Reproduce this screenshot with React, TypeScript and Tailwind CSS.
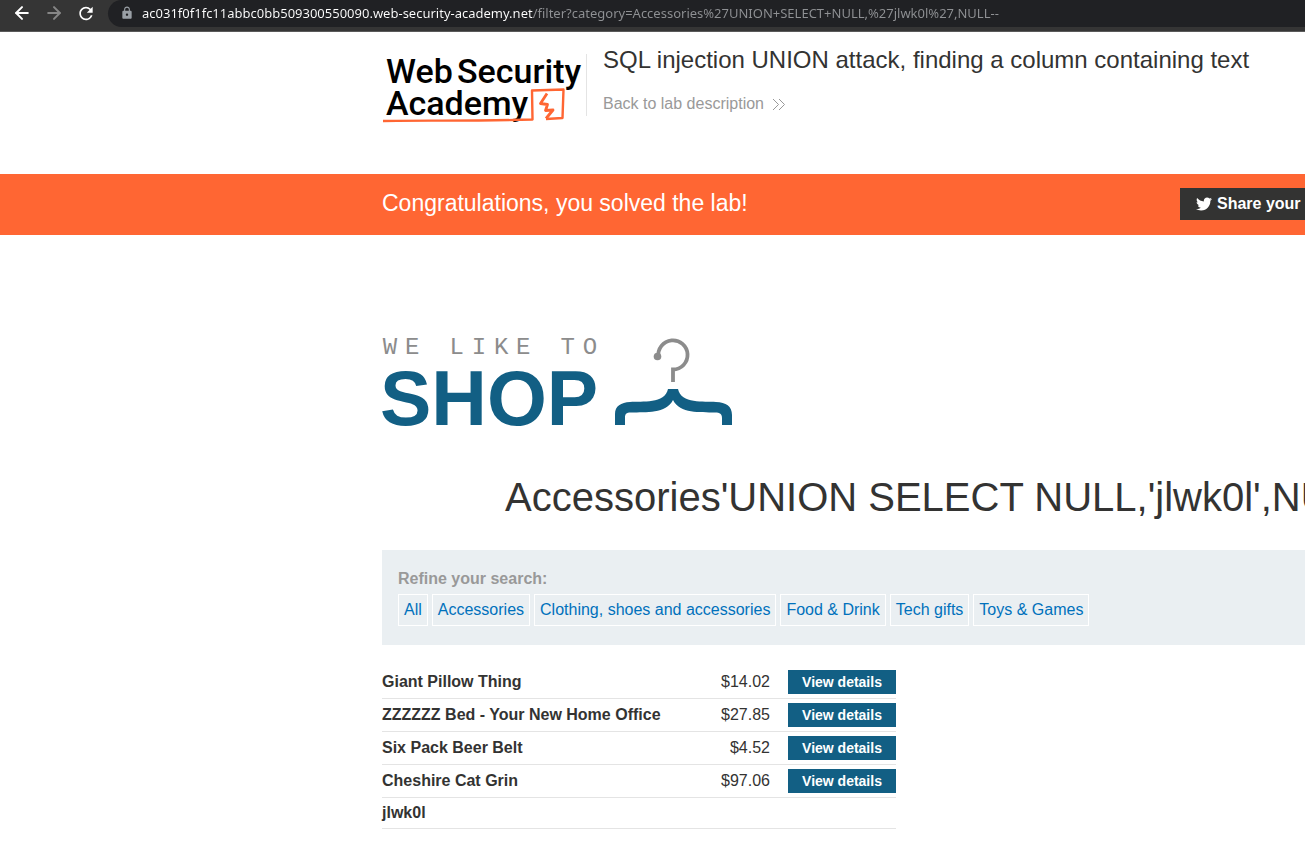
import { ArrowLeft, ArrowRight } from "lucide-react";
import { FaTwitter } from "react-icons/fa";
import { MdRefresh, MdLock } from "react-icons/md";

const products = [
  { name: "Giant Pillow Thing", price: "$14.02" },
  { name: "ZZZZZZ Bed - Your New Home Office", price: "$27.85" },
  { name: "Six Pack Beer Belt", price: "$4.52" },
  { name: "Cheshire Cat Grin", price: "$97.06" },
  { name: "jlwk0l", price: "" },
];

const categories = [
  "All",
  "Accessories",
  "Clothing, shoes and accessories",
  "Food & Drink",
  "Tech gifts",
  "Toys & Games",
];

function BrowserBar() {
  return (
    <div className="flex h-8 items-start border-b border-[#5a5a5a] bg-[#353535] text-white">
      <div className="flex h-[26px] shrink-0 items-center gap-3 px-3">
        <button type="button" aria-label="Back" className="flex w-5 justify-center">
          <ArrowLeft size={20} strokeWidth={2.4} />
        </button>
        <button type="button" aria-label="Forward" className="flex w-5 justify-center text-[#868686]">
          <ArrowRight size={20} strokeWidth={2.4} />
        </button>
        <button type="button" aria-label="Reload" className="flex w-5 justify-center">
          <MdRefresh size={21} />
        </button>
      </div>
      <div className="flex h-[27px] min-w-0 flex-1 items-center gap-2 rounded-l-full bg-[#202124] pb-0.5 pl-3">
        <MdLock size={14} className="shrink-0 text-[#9aa0a6]" />
        <input
          type="text"
          aria-label="Address"
          defaultValue="ac031f0f1fc11abbc0bb509300550090.web-security-academy.net/filter?category=Accessories%27UNION+SELECT+NULL,%27jlwk0l%27,NULL--"
          className="h-6 w-full min-w-0 bg-[linear-gradient(to_right,#ffffff_391px,#8f9194_391px)] bg-clip-text font-['Noto_Sans',sans-serif] text-[13px] text-transparent outline-none"
        />
      </div>
    </div>
  );
}

function AcademyLogo() {
  return (
    <svg width="202" height="72" viewBox="0 0 202 72" role="img" aria-label="Web Security Academy" className="overflow-visible">
      <g fontFamily="Roboto, sans-serif" fontSize="34" fontWeight="500" fill="#000">
        <text x="4" y="29">Web</text>
        <text x="75" y="29">Security</text>
        <text x="4" y="61">Academy</text>
      </g>
      <g fill="none" stroke="#ff6633" strokeWidth="2.4" strokeLinejoin="round">
        <path d="M1 67 C40 66 90 67.500 150.500 65.500 L150 36.500 L181.500 35.500 L180.500 64 L164 65" />
        <path d="M165 39.500 L158.500 49.500 L165.500 50.500 L163.500 56.500 L171 56 L164 64.500" strokeWidth="2.8" />
      </g>
    </svg>
  );
}

function ShopLogo() {
  const tagline = ["W", "E", "", "L", "I", "K", "E", "", "T", "O"];
  return (
    <div className="flex h-[92px] items-start gap-4">
      <div className="w-[216px] pt-0.5">
        <p aria-label="We like to" className="flex h-5 items-center justify-between font-['Liberation_Mono',monospace] text-2xl leading-5 text-[#8c8c8c]">
          {tagline.map((letter, i) => (
            <span key={i} className="w-4 text-center">{letter}</span>
          ))}
        </p>
        <p className="-ml-0.5 text-[77px] leading-[80px] font-bold text-[#125f84]">SHOP</p>
      </div>
      <svg width="119" height="90" viewBox="0 0 119 90" aria-hidden="true">
        <path d="M44.500 21 A14.600 14.600 0 1 1 59 33.500 V46" fill="none" stroke="#8c8c8c" strokeWidth="3.800" />
        <circle cx="43.500" cy="20.500" r="3.800" fill="#8c8c8c" />
        <path d="M1 89 V78 C1 70 7 66.500 16 66 C28 65 51 68 54 53 H64 C67 68 90 65 102 66 C112 66.500 118 70 118 79 V89 H108 V82 C108 78 106 76.500 101 76.500 C86 76 66 78 59 64 C52 78 32 76 17 76.500 C12 76.500 11 78 11 82 V89 Z" fill="#125f84" />
      </svg>
    </div>
  );
}

export default function App() {
  return (
    <div className="min-h-screen overflow-hidden bg-white font-['Liberation_Sans',Arial,sans-serif] text-base text-[#333332]">
      <BrowserBar />

      <header className="flex h-[142px] items-start pl-[382px]">
        <a href="#" className="mt-[22px] h-[62px] w-[205px] shrink-0 border-r border-[#e4e4e4]">
          <AcademyLogo />
        </a>
        <div className="pt-[14px] pl-4">
          <h1 className="text-2xl leading-7 whitespace-nowrap">SQL injection UNION attack, finding a column containing text</h1>
          <a href="#" className="mt-[18px] flex items-center gap-2 text-[#999]">
            Back to lab description
            <svg width="13" height="13" viewBox="0 0 13 13" fill="none" stroke="currentColor" aria-hidden="true">
              <path d="M1 1 L6.500 6.500 L1 12 M7 1 L12.500 6.500 L7 12" />
            </svg>
          </a>
        </div>
      </header>

      <section className="flex h-[61px] items-center justify-between bg-[#ff6633] pb-0.5 pl-[382px] text-white">
        <p className="text-[23px]">Congratulations, you solved the lab!</p>
        <button type="button" className="flex h-8 w-[125px] items-center gap-[5px] overflow-hidden bg-[#333332] pl-4 font-bold whitespace-nowrap">
          <FaTwitter size={16} className="shrink-0" />
          Share your skills!
        </button>
      </section>

      <main className="pt-[101px] pl-[382px]">
        <ShopLogo />
        <h2 className="mt-[45px] pl-[123px] text-[40px] leading-[48px] whitespace-nowrap">
          Accessories'UNION SELECT NULL,'jlwk0l',NULL--
        </h2>
        <section className="mt-[29px] h-[95px] bg-[#eaeff2] px-4 pt-[19px]">
          <p className="leading-5 font-bold text-[#999]">Refine your search:</p>
          <nav className="mt-[5px] flex gap-1">
            {categories.map((c) => (
              <a key={c} href="#" className="flex h-8 items-center border border-white px-[5px] whitespace-nowrap text-[#0071bc]">
                {c}
              </a>
            ))}
          </nav>
        </section>

        <table className="mt-[21px] w-[514px] border-collapse">
          <tbody>
            {products.map((p) => (
              <tr key={p.name} className="border-b border-[#e4e4e4]">
                <td className="h-[31px] font-bold">{p.name}</td>
                <td className="w-20 pr-[18px] text-right">{p.price}</td>
                <td className="w-[108px]">
                  {p.price && (
                    <a href="#" className="my-1 flex h-6 items-center justify-center bg-[#125f84] text-sm font-bold text-white">
                      View details
                    </a>
                  )}
                </td>
              </tr>
            ))}
          </tbody>
        </table>
      </main>
    </div>
  );
}
